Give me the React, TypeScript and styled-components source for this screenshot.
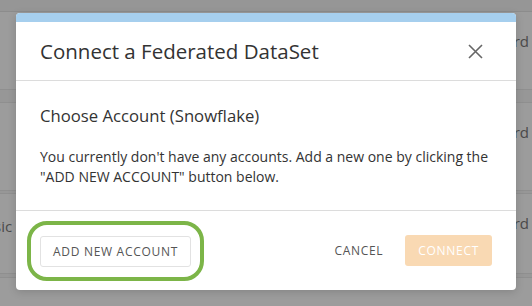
import React from "react";
import styled, { createGlobalStyle } from "styled-components";

const Global = createGlobalStyle`
  html, body { margin: 0; padding: 0; }
  body {
    width: 532px; height: 306px; overflow: hidden;
    font-family: "Open Sans", "Noto Sans", sans-serif;
    background: #9b9b9b;
  }
`;

const Page = styled.div`
  position: relative;
  width: 532px;
  height: 306px;
  overflow: hidden;
  background: #9c9c9c;
  display: flex;
  flex-direction: column;
`;

const TopBand = styled.div`
  height: 11px;
  background: #969696;
  border-bottom: 1px solid #8c8c8c;
`;

const BgRow = styled.div<{ $h: number }>`
  height: ${(p) => p.$h}px;
  box-sizing: border-box;
  padding-top: 19px;
  display: flex;
  align-items: flex-start;
  justify-content: space-between;
  border-bottom: 1px solid #8f8f8f;
  font-size: 15px;
  line-height: 20px;
  color: #4a4a4a;
`;

const BgGap = styled.div<{ $h: number }>`
  height: ${(p) => p.$h}px;
  background: #979797;
  border-bottom: 1px solid #8f8f8f;
`;

const BgLeft = styled.span<{ $drop: number }>`
  margin-left: -24px;
  margin-top: ${(p) => p.$drop}px;
`;

const BgRight = styled.span`
  margin-right: 3px;
  margin-left: auto;
`;

const Modal = styled.div`
  position: absolute;
  left: 16px;
  top: 13px;
  width: 500px;
  height: 277px;
  background: #fff;
  border-radius: 4px;
  overflow: hidden;
  display: flex;
  flex-direction: column;
  box-shadow: 0 2px 8px rgba(0, 0, 0, 0.15);
`;

const Accent = styled.div`
  height: 9px;
  background: #a6cfee;
`;

const Header = styled.div`
  height: 58px;
  display: flex;
  align-items: center;
  justify-content: space-between;
  padding: 0 33px 0 24px;
  border-bottom: 1px solid #dcdcdc;
`;

const Title = styled.h1`
  margin: 0;
  font-size: 20.5px;
  font-weight: 500;
  color: #333;
`;

const Close = styled.button`
  border: 0;
  background: none;
  padding: 0;
  width: 16px;
  height: 16px;
  display: flex;
  align-items: center;
  justify-content: center;
  cursor: pointer;
`;

const Body = styled.div`
  flex: 1;
  padding: 23px 24px 0;
  border-bottom: 1px solid #dcdcdc;
`;

const Subtitle = styled.h2`
  margin: 0 0 20px;
  font-size: 16.7px;
  font-weight: 500;
  color: #333;
`;

const Text = styled.p`
  margin: 0;
  font-size: 14px;
  line-height: 20px;
  color: #333;
`;

const Footer = styled.div`
  height: 79px;
  display: flex;
  align-items: center;
  padding: 0 24px;
  gap: 21px;
`;

const Button = styled.button<{ $variant: "outline" | "text" | "primary" }>`
  font-family: inherit;
  font-size: 12px;
  letter-spacing: 0.7px;
  height: 31px;
  border-radius: 3px;
  cursor: pointer;
  position: relative;
  padding: 0 ${(p) => (p.$variant === "text" ? 0 : 12)}px;
  border: 1px solid ${(p) => (p.$variant === "outline" ? "#e2e2e2" : "transparent")};
  background: ${(p) => (p.$variant === "primary" ? "#f9d9b3" : "#fff")};
  color: ${(p) => (p.$variant === "primary" ? "#fff" : "#555")};
`;

const Highlight = styled(Button)`
  margin-top: 1px;
  &::after {
    content: "";
    position: absolute;
    left: -14px;
    right: -14px;
    top: -16px;
    bottom: -15px;
    border: 4px solid #7cb548;
    border-radius: 20px;
    pointer-events: none;
  }
`;

const Spacer = styled.div`
  flex: 1;
`;

export default function App() {
  return (
    <>
      <Global />
      <Page>
        <TopBand />
        <BgRow $h={78}>
          <BgRight>Dashboard</BgRight>
        </BgRow>
        <BgGap $h={12} />
        <BgRow $h={88}>
          <BgRight>Dashboard</BgRight>
        </BgRow>
        <BgGap $h={2} />
        <BgRow $h={80}>
          <BgLeft $drop={3}>Basic</BgLeft>
          <BgRight>Dashboard</BgRight>
        </BgRow>
        <BgGap $h={3} />
        <Modal>
          <Accent />
          <Header>
            <Title>Connect a Federated DataSet</Title>
            <Close aria-label="Close">
              <svg width="15" height="15" viewBox="0 0 15 15">
                <path d="M1 1 L14 14 M14 1 L1 14" stroke="#666" strokeWidth="1.6" fill="none" />
              </svg>
            </Close>
          </Header>
          <Body>
            <Subtitle>Choose Account (Snowflake)</Subtitle>
            <Text>
              You currently don't have any accounts. Add a new one by clicking the
              "ADD NEW ACCOUNT" button below.
            </Text>
          </Body>
          <Footer>
            <Highlight $variant="outline">ADD NEW ACCOUNT</Highlight>
            <Spacer />
            <Button $variant="text">CANCEL</Button>
            <Button $variant="primary">CONNECT</Button>
          </Footer>
        </Modal>
      </Page>
    </>
  );
}
